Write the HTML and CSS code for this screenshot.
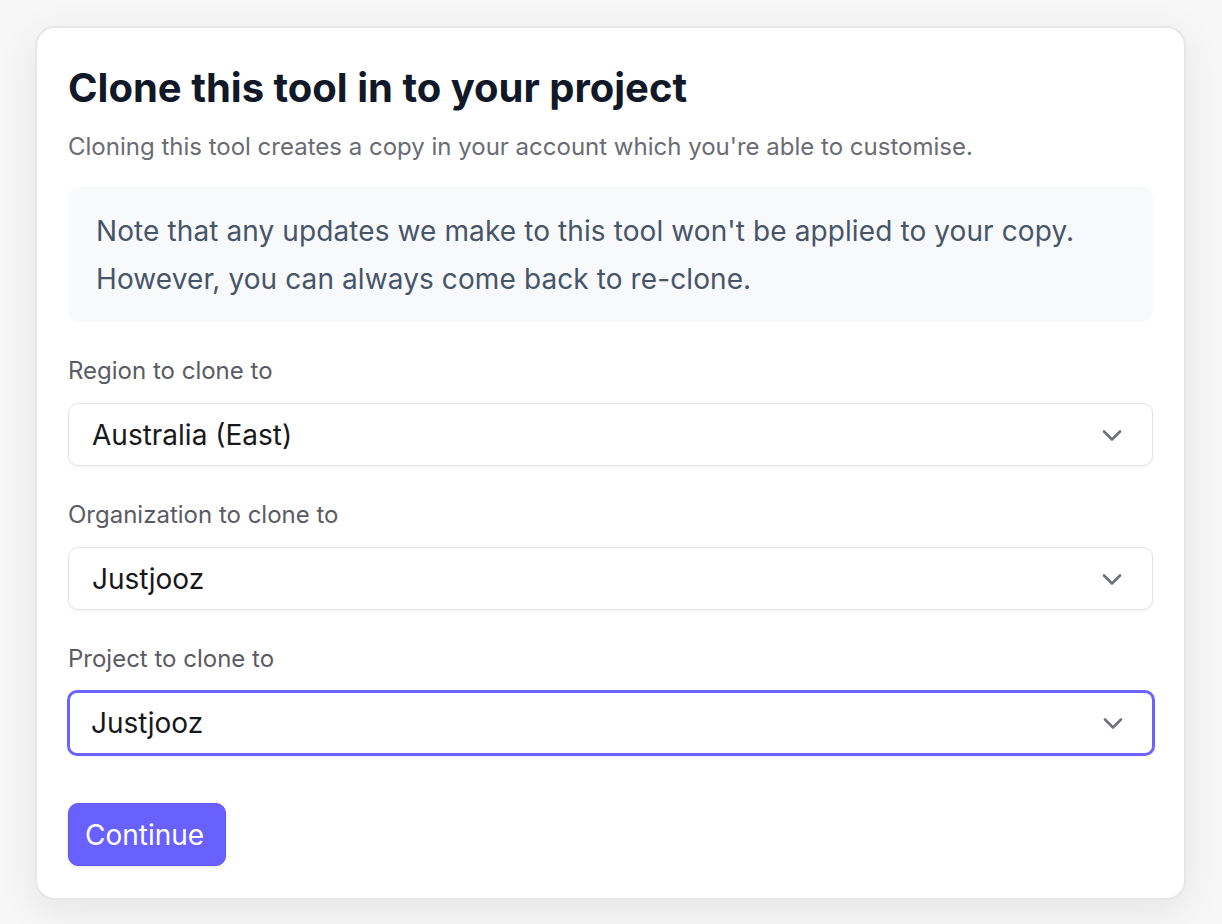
FILE: index.html
```html
<!DOCTYPE html>
<html lang="en">
<head>
    <meta charset="UTF-8">
    <meta name="viewport" content="width=device-width, initial-scale=1.0">
    <title>Clone tool</title>
    <link rel="stylesheet" href="styles.css">
</head>
<body>

<div class="backdrop">
    <div class="modal">
        <h1>Clone this tool in to your project</h1>
        <p class="subtitle">Cloning this tool creates a copy in your account which you're able to customise.</p>

        <div class="note">
            Note that any updates we make to this tool won't be applied to your copy.<br>
            However, you can always come back to re-clone.
        </div>

        <!-- Clone options -->
        <div class="field">
            <label for="region">Region to clone to</label>
            <div class="select">
                <span>Australia (East)</span>
                <svg class="chevron" viewBox="0 0 24 24" fill="none" stroke="currentColor" stroke-width="2.6" stroke-linecap="round" stroke-linejoin="round"><path d="M4 8.5l8 8 8-8"/></svg>
            </div>
        </div>

        <div class="field">
            <label for="org">Organization to clone to</label>
            <div class="select">
                <span>Justjooz</span>
                <svg class="chevron" viewBox="0 0 24 24" fill="none" stroke="currentColor" stroke-width="2.6" stroke-linecap="round" stroke-linejoin="round"><path d="M4 8.5l8 8 8-8"/></svg>
            </div>
        </div>

        <div class="field">
            <label for="project">Project to clone to</label>
            <div class="select focused">
                <span>Justjooz</span>
                <svg class="chevron" viewBox="0 0 24 24" fill="none" stroke="currentColor" stroke-width="2.6" stroke-linecap="round" stroke-linejoin="round"><path d="M4 8.5l8 8 8-8"/></svg>
            </div>
        </div>

        <button class="continue-btn">Continue</button>
    </div>
</div>

</body>
</html>
```

FILE: styles.css
```css
/* Basic styling */
body {
    font-family: Inter, "Noto Sans", sans-serif;
    background-color: #f7f7f8;
    margin: 0;
    padding: 0;
}
.backdrop {
    padding: 26px 36px 24px 35px;
}
.modal {
    background-color: #fff;
    border: 2px solid #e7e7e9;
    border-radius: 20px;
    padding: 36px 31px 32px 31px;
    box-shadow: 0 10px 40px rgba(0, 0, 0, 0.08);
}
h1 {
    margin: 0;
    font-size: 40px;
    font-weight: 700;
    color: #111827;
    line-height: 48px;
}
.subtitle {
    margin: 20px 0 0 0;
    font-size: 24px;
    color: #6b6b73;
    line-height: 30px;
}
.note {
    margin-top: 25px;
    background-color: #f8f9fb;
    border-radius: 12px;
    padding: 20px 28px 19px 28px;
    font-size: 28px;
    letter-spacing: 0.1px;
    line-height: 48px;
    color: #475569;
}
.field {
    margin-top: 34px;
}
.field label {
    display: block;
    font-size: 24px;
    color: #5b5b63;
    line-height: 30px;
    margin-bottom: 17px;
}
.select {
    box-sizing: border-box;
    display: flex;
    align-items: center;
    justify-content: space-between;
    height: 63px;
    padding: 0 28px 0 23px;
    border: 1.5px solid #e4e4e7;
    border-radius: 10px;
    box-shadow: 0 1px 3px rgba(0, 0, 0, 0.05);
    font-size: 28px;
    color: #18181b;
}
.select.focused {
    height: 66px;
    border: 3px solid #6c63ff;
    padding: 0 26.5px 0 21.5px;
    margin: -1.5px -1.5px;
}
.chevron {
    width: 24px;
    height: 24px;
    color: #71717a;
}
.continue-btn {
    margin-top: 49px;
    padding: 0 21px 0 16px;
    height: 63px;
    background-color: #6961ff;
    color: white;
    border: 1px solid #5f57f0;
    border-radius: 10px;
    font-family: Inter, sans-serif;
    font-size: 28px;
    cursor: pointer;
    box-shadow: 0 2px 4px rgba(0, 0, 0, 0.08);
}
```
